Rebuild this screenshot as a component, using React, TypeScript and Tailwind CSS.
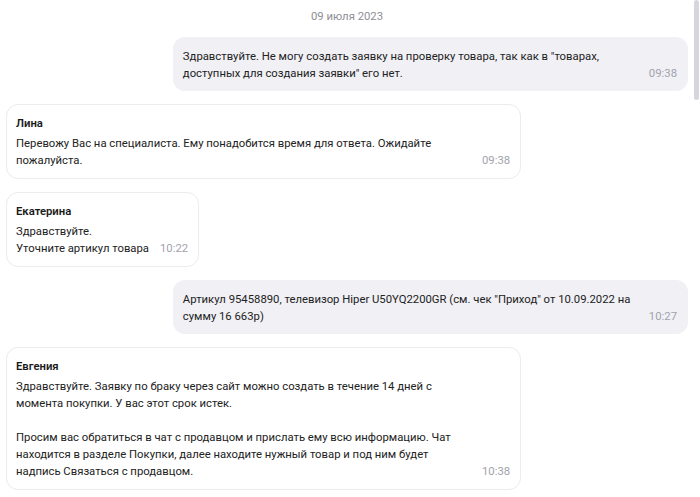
const messages = [
  {
    id: 1,
    out: true,
    text: 'Здравствуйте. Не могу создать заявку на проверку товара, так как в "товарах, доступных для создания заявки" его нет.',
    time: "09:38",
  },
  {
    id: 2,
    out: false,
    author: "Лина",
    text: "Перевожу Вас на специалиста. Ему понадобится время для ответа. Ожидайте пожалуйста.",
    time: "09:38",
  },
  {
    id: 3,
    out: false,
    author: "Екатерина",
    text: "Здравствуйте.\nУточните артикул товара",
    time: "10:22",
  },
  {
    id: 4,
    out: true,
    text: 'Артикул 95458890, телевизор Hiper U50YQ2200GR (см. чек "Приход" от 10.09.2022 на сумму 16 663р)',
    time: "10:27",
  },
  {
    id: 5,
    out: false,
    author: "Евгения",
    text: "Здравствуйте. Заявку по браку через сайт можно создать в течение 14 дней с момента покупки. У вас этот срок истек.\n\nПросим вас обратиться в чат с продавцом и прислать ему всю информацию. Чат находится в разделе Покупки, далее находите нужный товар и под ним будет надпись Связаться с продавцом.",
    time: "10:38",
  },
];

type Msg = (typeof messages)[number] & { author?: string };

const Bubble = ({ msg }: { msg: Msg }) => {
  return (
    <div
      className={
        msg.out
          ? "self-end rounded-[12px] bg-[#f0f0f5] pl-[10px] pr-[11px] pt-[11px] pb-[9px]"
          : "self-start rounded-[12px] border border-[#ebebf0] bg-white pl-[9px] pr-[10px] pt-[10px] pb-[9px]"
      }
    >
      {msg.author && (
        <div className="mb-[3px] font-semibold text-[#1a1a1a]">{msg.author}</div>
      )}
      <div className="flex items-end gap-[11px]">
        <p className="max-w-[455px] whitespace-pre-line text-[#222]">{msg.text}</p>
        <span className="shrink-0 text-[#a2a2ab]">{msg.time}</span>
      </div>
    </div>
  );
};

export default function App() {
  return (
    <div className="relative h-[497px] w-[700px] overflow-hidden bg-white font-['Roboto',sans-serif] text-[11.3px] leading-[17px]">
      <div className="flex flex-col gap-[13px] pl-[6px] pr-[12px] pt-[8px]">
        <div className="mb-[-1px] text-center text-[#8e8e96]">09 июля 2023</div>
        {messages.map((m) => (
          <Bubble key={m.id} msg={m as Msg} />
        ))}
      </div>
      {/* scrollbar thumb */}
      <div className="absolute right-[1px] top-0 h-[100px] w-[5px] rounded-full bg-[#d6d6dc]" />
    </div>
  );
}
